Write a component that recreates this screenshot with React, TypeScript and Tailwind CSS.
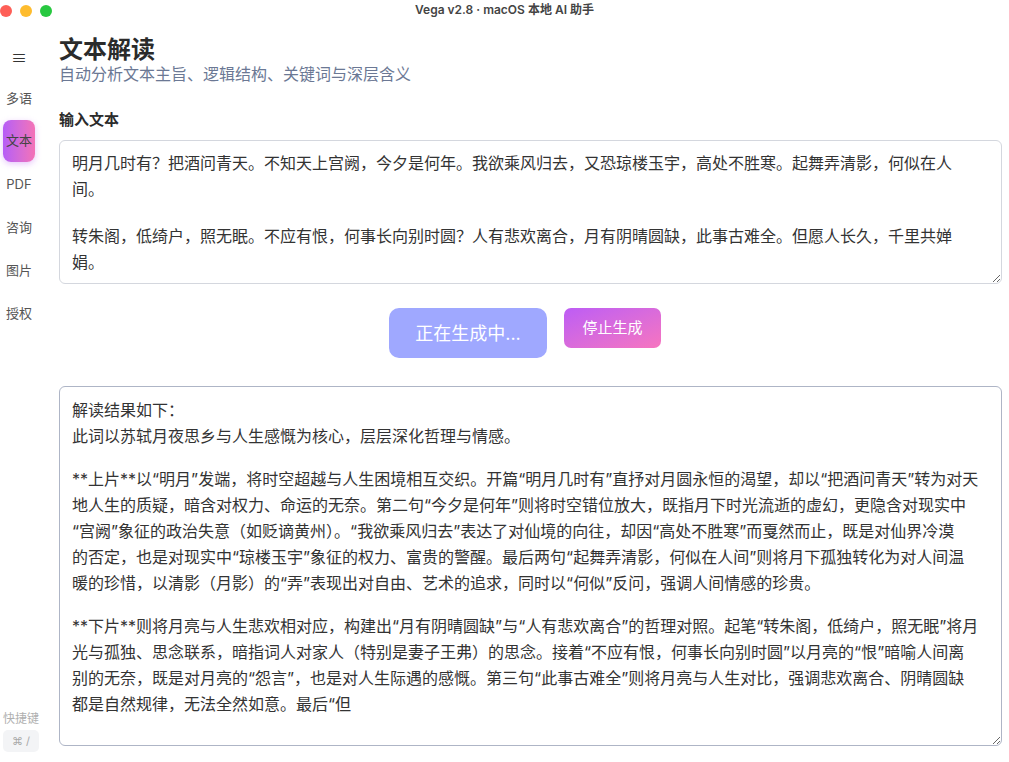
const inputLines = [
  '明月几时有？把酒问青天。不知天上宫阙，今夕是何年。我欲乘风归去，又恐琼楼玉宇，高处不胜寒。起舞弄清影，何似在人',
  '间。',
  '',
  '转朱阁，低绮户，照无眠。不应有恨，何事长向别时圆？人有悲欢离合，月有阴晴圆缺，此事古难全。但愿人长久，千里共婵',
  '娟。',
]

const outputLines = [
  '解读结果如下：',
  '此词以苏轼月夜思乡与人生感慨为核心，层层深化哲理与情感。',
  '',
  '**上片**以“明月”发端，将时空超越与人生困境相互交织。开篇“明月几时有”直抒对月圆永恒的渴望，却以“把酒问青天”转为对天',
  '地人生的质疑，暗含对权力、命运的无奈。第二句“今夕是何年”则将时空错位放大，既指月下时光流逝的虚幻，更隐含对现实中',
  '“宫阙”象征的政治失意（如贬谪黄州）。“我欲乘风归去”表达了对仙境的向往，却因“高处不胜寒”而戛然而止，既是对仙界冷漠',
  '的否定，也是对现实中“琼楼玉宇”象征的权力、富贵的警醒。最后两句“起舞弄清影，何似在人间”则将月下孤独转化为对人间温',
  '暖的珍惜，以清影（月影）的“弄”表现出对自由、艺术的追求，同时以“何似”反问，强调人间情感的珍贵。',
  '',
  '**下片**则将月亮与人生悲欢相对应，构建出“月有阴晴圆缺”与“人有悲欢离合”的哲理对照。起笔“转朱阁，低绮户，照无眠”将月',
  '光与孤独、思念联系，暗指词人对家人（特别是妻子王弗）的思念。接着“不应有恨，何事长向别时圆”以月亮的“恨”暗喻人间离',
  '别的无奈，既是对月亮的“怨言”，也是对人生际遇的感慨。第三句“此事古难全”则将月亮与人生对比，强调悲欢离合、阴晴圆缺',
  '都是自然规律，无法全然如意。最后“但',
]

const navItems = ['多语', '文本', 'PDF', '咨询', '图片', '授权']

function TextBox({ lines, blank, className }: { lines: string[]; blank: string; className: string }) {
  return (
    <div className={`resize-y overflow-hidden rounded-[6px] border bg-white px-[12px] text-[16px] text-[#333] ${className}`}>
      {lines.map((line, i) =>
        line === '' ? (
          <div key={i} className={blank} />
        ) : (
          <div key={i} className="h-[26px] whitespace-nowrap leading-[26px]">
            {line}
          </div>
        ),
      )}
    </div>
  )
}

export default function App() {
  return (
    <div className="flex h-[762px] w-[1009px] flex-col overflow-hidden bg-white font-['Inter','Noto_Sans_CJK_SC',sans-serif]">
      {/* window title bar */}
      <div className="relative flex h-[22px] shrink-0 items-center">
        <div className="flex items-center gap-[8px] pl-0">
          <span className="h-[12px] w-[12px] rounded-full bg-[#fe5f57]" />
          <span className="h-[12px] w-[12px] rounded-full bg-[#febc2e]" />
          <span className="h-[12px] w-[12px] rounded-full bg-[#28c840]" />
        </div>
        <div className="absolute inset-x-0 top-0 flex h-[20px] items-center justify-center text-[12px] font-semibold text-[#444]">
          Vega v2.8 · macOS 本地 AI 助手
        </div>
      </div>

      <div className="flex min-h-0 flex-1">
        {/* sidebar */}
        <aside className="flex w-[38px] shrink-0 flex-col justify-between pt-[17px] pb-[10px]">
          <div className="flex flex-col">
            <div className="flex h-[38px] items-center justify-center text-[16px] text-[#333]">≡</div>
            {navItems.map((item) =>
              item === '文本' ? (
                <div key={item} className="flex h-[43px] justify-center">
                  <div className="flex h-[42px] w-[32px] items-center justify-center rounded-[8px] bg-gradient-to-r from-[#b65cf7] to-[#f472b6] text-[13px] text-[#444] shadow-[0_2px_6px_rgba(182,92,247,0.35)]">
                    {item}
                  </div>
                </div>
              ) : (
                <div key={item} className="flex h-[43px] items-center justify-center text-[13px] text-[#555]">
                  {item}
                </div>
              ),
            )}
          </div>
          <div className="flex flex-col items-start pl-[3px]">
            <div className="mb-[4px] whitespace-nowrap text-[12px] leading-[14px] text-[#b0b0b0]">快捷键</div>
            <div className="flex h-[22px] w-[36px] items-center justify-center rounded-[5px] bg-[#f3f4f6] text-[11px] text-[#a8a8a8]">
              ⌘ /
            </div>
          </div>
        </aside>

        {/* main */}
        <main className="ml-[21px] mr-[7px] flex min-w-0 flex-1 flex-col pt-[14px]">
          <h1 className="text-[24px] font-bold leading-[28px] text-[#2b2b2b]">文本解读</h1>
          <p className="text-[16px] leading-[20px] text-[#6b7894]">自动分析文本主旨、逻辑结构、关键词与深层含义</p>

          <div className="mt-[25px] mb-[9px] text-[15px] font-bold leading-[22px] text-[#2b2b2b]">输入文本</div>
          <TextBox
            lines={inputLines}
            blank="h-[21px]"
            className="h-[144px] shrink-0 border-[#d4d7de] pt-[9px]"
          />

          <div className="mt-[24px] flex items-start justify-center gap-[17px] pr-[11px]">
            <button
              type="button"
              className="flex h-[50px] w-[158px] items-center justify-center rounded-[10px] bg-[#9fa8ff] text-[18px] text-white"
            >
              正在生成中...
            </button>
            <button
              type="button"
              className="flex h-[40px] w-[97px] items-center justify-center rounded-[7px] bg-gradient-to-br from-[#bd5cf5] to-[#f774bf] text-[15px] text-white"
            >
              停止生成
            </button>
          </div>

          <TextBox
            lines={outputLines}
            blank="h-[17px]"
            className="mt-[28px] h-[360px] shrink-0 border-[#aeb5c6] pt-[10px]"
          />
        </main>
      </div>
    </div>
  )
}
